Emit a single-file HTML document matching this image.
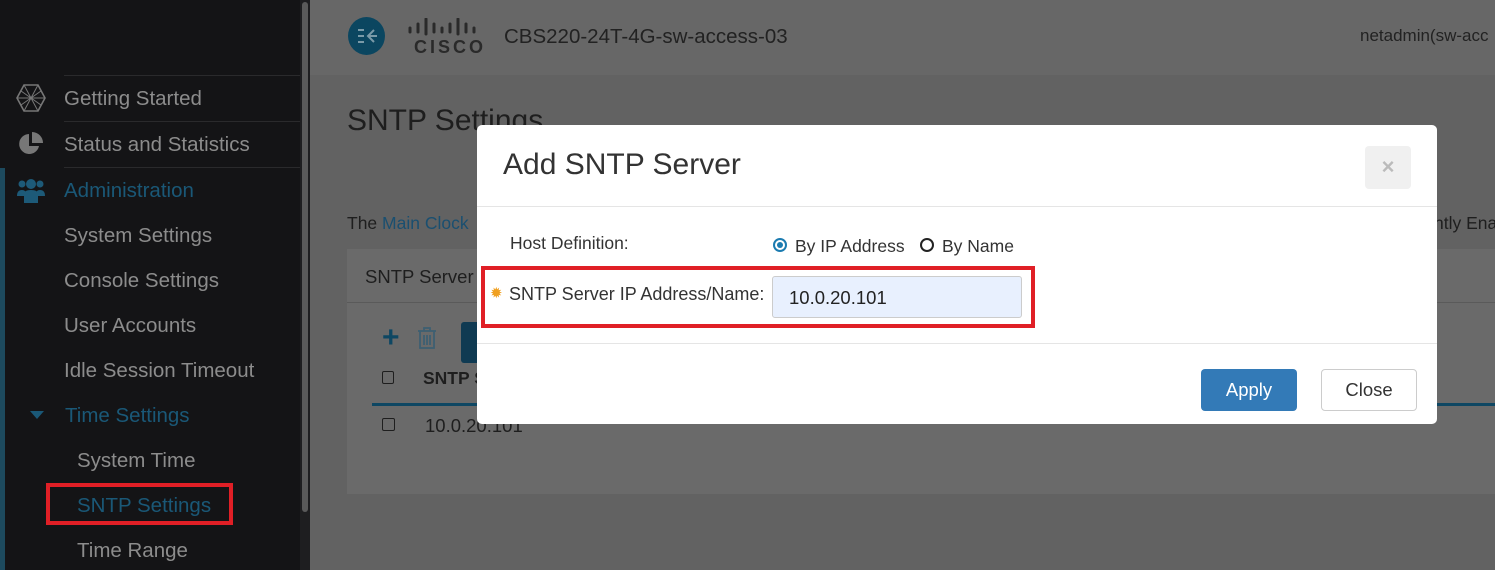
<!DOCTYPE html>
<html><head><meta charset="utf-8"><style>
*{margin:0;padding:0;box-sizing:border-box}
body{width:1495px;height:570px;overflow:hidden;font-family:"Liberation Sans",sans-serif;background:#626262;position:relative}
.a{position:absolute;white-space:nowrap}
.side{left:0;top:0;width:300px;height:570px;background:#141416}
.st{color:#8c8c8c;font-size:20.5px;white-space:nowrap}
.bl{color:#1a5877}
.hr{height:1px;background:#2a2a2c;left:64px;width:236px}
</style></head><body>
<div class="a side"></div>
<div class="a" style="left:0;top:168px;width:5px;height:402px;background:#1d4a5e"></div>
<div class="a" style="left:300px;top:0;width:10px;height:570px;background:#1e1e20"></div>
<div class="a" style="left:302px;top:2px;width:6px;height:510px;background:#5a5a5a;border-radius:3px"></div>
<div class="a hr" style="top:75px"></div>
<div class="a hr" style="top:121px"></div>
<div class="a hr" style="top:167px"></div>
<svg class="a" style="left:16px;top:84px" width="30" height="28" viewBox="0 0 30 28"><polygon points="8,1 22,1 29,14 22,27 8,27 1,14" fill="none" stroke="#777" stroke-width="1.6"/><path d="M8 1L22 27M22 1L8 27M1 14H29M5 7L25 21M25 7L5 21" stroke="#777" stroke-width="1"/></svg>
<svg class="a" style="left:18px;top:131px" width="26" height="26" viewBox="0 0 26 26"><path d="M11 3A10 10 0 1 0 21 15H11Z" fill="#777"/><path d="M14 1V12H25A11 11 0 0 0 14 1Z" fill="#777"/></svg>
<svg class="a" style="left:17px;top:177px" width="28" height="27" viewBox="0 0 28 27"><circle cx="14" cy="7" r="5" fill="#1d5a78"/><circle cx="5" cy="7" r="3.5" fill="#1d5a78"/><circle cx="23" cy="7" r="3.5" fill="#1d5a78"/><path d="M7 26V17Q7 13 14 13Q21 13 21 17V26Z" fill="#1d5a78"/><path d="M0 19Q0 13 5 13Q7 13 8 14V19Z M28 19Q28 13 23 13Q21 13 20 14V19Z" fill="#1d5a78"/></svg>
<div class="a st" style="left:64px;top:87px">Getting Started</div>
<div class="a st" style="left:64px;top:133px">Status and Statistics</div>
<div class="a st bl" style="left:64px;top:179px">Administration</div>
<div class="a st" style="left:64px;top:224px">System Settings</div>
<div class="a st" style="left:64px;top:269px">Console Settings</div>
<div class="a st" style="left:64px;top:314px">User Accounts</div>
<div class="a st" style="left:64px;top:359px">Idle Session Timeout</div>
<div class="a" style="left:30px;top:411px;width:0;height:0;border-left:7px solid transparent;border-right:7px solid transparent;border-top:8px solid #1a5877"></div>
<div class="a st bl" style="left:65px;top:404px">Time Settings</div>
<div class="a st" style="left:77px;top:449px">System Time</div>
<div class="a st bl" style="left:77px;top:494px">SNTP Settings</div>
<div class="a" style="left:46px;top:483px;width:187px;height:42px;border:4px solid #e01f26"></div>
<div class="a st" style="left:77px;top:539px">Time Range</div>
<!-- header -->
<div class="a" style="left:310px;top:0;width:1185px;height:75px;background:#676767"></div>
<div class="a" style="left:348px;top:17px;width:37px;height:38px;border-radius:50%;background:#0b4660"></div>
<svg class="a" style="left:356px;top:26px" width="22" height="20" viewBox="0 0 22 20"><path d="M2 4H8M2 10H8M2 16H8M18 4L12 10L18 16M12 10H21" stroke="#7a9aa8" stroke-width="2" fill="none"/></svg>
<svg class="a" style="left:408px;top:18px" width="76" height="20" viewBox="0 0 76 20"><g stroke="#2a2a2a" stroke-width="3" stroke-linecap="round"><path d="M2 10V14M10 6V14M18 1V16M26 6V14M34 10V14M42 6V14M50 1V16M58 6V14M66 10V14"/></g></svg>
<div class="a" style="left:414px;top:37px;font-size:18px;font-weight:bold;color:#2a2a2a;letter-spacing:3px">CISCO</div>
<div class="a" style="left:504px;top:25px;font-size:20.5px;color:#222">CBS220-24T-4G-sw-access-03</div>
<div class="a" style="left:1360px;top:26px;font-size:17px;color:#222">netadmin(sw-acc</div>
<div class="a" style="left:347px;top:104px;font-size:30px;color:#1e1e1e">SNTP Settings</div>
<div class="a" style="left:347px;top:213px;font-size:17.5px;color:#1e1e1e">The <span style="color:#1a4f70">Main Clock</span></div>
<div class="a" style="left:1434px;top:213px;font-size:17.5px;color:#1e1e1e">ntly Ena</div>
<div class="a" style="left:347px;top:249px;width:1148px;height:245px;background:#6a6a6a"></div>
<div class="a" style="left:347px;top:302px;width:1148px;height:1px;background:#5a5a5a"></div>
<div class="a" style="left:365px;top:266px;font-size:18.5px;color:#1e1e1e">SNTP Server</div>
<div class="a" style="left:382px;top:326px;font-size:30px;font-weight:bold;color:#0e4763;line-height:24px">+</div>
<svg class="a" style="left:416px;top:326px" width="22" height="24" viewBox="0 0 22 24"><path d="M2 5H20M8 5V2H14V5M4 5V22H18V5M8 9V19M11 9V19M14 9V19" stroke="#3d5f72" stroke-width="1.8" fill="none"/></svg>
<div class="a" style="left:461px;top:322px;width:20px;height:41px;background:#0f3a52;border-radius:3px"></div>
<div class="a" style="left:382px;top:371px;width:12px;height:13px;border:1.5px solid #1e1e1e;border-radius:2px"></div>
<div class="a" style="left:423px;top:368px;font-size:17.5px;font-weight:bold;color:#1e1e1e">SNTP S</div>
<div class="a" style="left:372px;top:403px;width:1123px;height:3px;background:#0e4763"></div>
<div class="a" style="left:382px;top:418px;width:13px;height:13px;border:1.5px solid #1e1e1e;border-radius:2px"></div>
<div class="a" style="left:425px;top:415px;font-size:18.5px;color:#1e1e1e">10.0.20.101</div>
<!-- modal -->
<div class="a" style="left:477px;top:125px;width:960px;height:299px;background:#fff;border-radius:5px"></div>
<div class="a" style="left:503px;top:148px;font-size:30px;color:#333">Add SNTP Server</div>
<div class="a" style="left:1365px;top:146px;width:46px;height:43px;background:#f0f0f0;border-radius:4px;color:#bbb;font-size:22px;font-weight:bold;text-align:center;line-height:42px">×</div>
<div class="a" style="left:477px;top:206px;width:960px;height:1px;background:#e5e5e5"></div>
<div class="a" style="left:510px;top:233px;font-size:17.5px;color:#333">Host Definition:</div>
<div class="a" style="left:773px;top:238px;width:14px;height:14px;border:2px solid #1b7bb0;border-radius:50%"></div>
<div class="a" style="left:777px;top:242px;width:6px;height:6px;background:#1b7bb0;border-radius:50%"></div>
<div class="a" style="left:795px;top:236px;font-size:17.5px;color:#333">By IP Address</div>
<div class="a" style="left:920px;top:238px;width:14px;height:14px;border:2px solid #222;border-radius:50%"></div>
<div class="a" style="left:942px;top:236px;font-size:17.5px;color:#333">By Name</div>
<div class="a" style="left:481px;top:266px;width:554px;height:62px;border:4px solid #e01f26"></div>
<div class="a" style="left:490px;top:284px;font-size:15px;color:#f0a020">✹</div>
<div class="a" style="left:509px;top:284px;font-size:18px;color:#333">SNTP Server IP Address/Name:</div>
<div class="a" style="left:772px;top:276px;width:250px;height:42px;background:#e8f0fe;border:1px solid #ccc;border-radius:3px;padding:10px 16px;font-size:18.5px;color:#222">10.0.20.101</div>
<div class="a" style="left:477px;top:343px;width:960px;height:1px;background:#e5e5e5"></div>
<div class="a" style="left:1201px;top:369px;width:96px;height:42px;background:#337ab7;border-radius:4px;color:#fff;font-size:18.5px;text-align:center;line-height:42px">Apply</div>
<div class="a" style="left:1321px;top:369px;width:96px;height:42px;background:#fff;border:1px solid #ccc;border-radius:4px;color:#333;font-size:18.5px;text-align:center;line-height:40px">Close</div>
</body></html>
